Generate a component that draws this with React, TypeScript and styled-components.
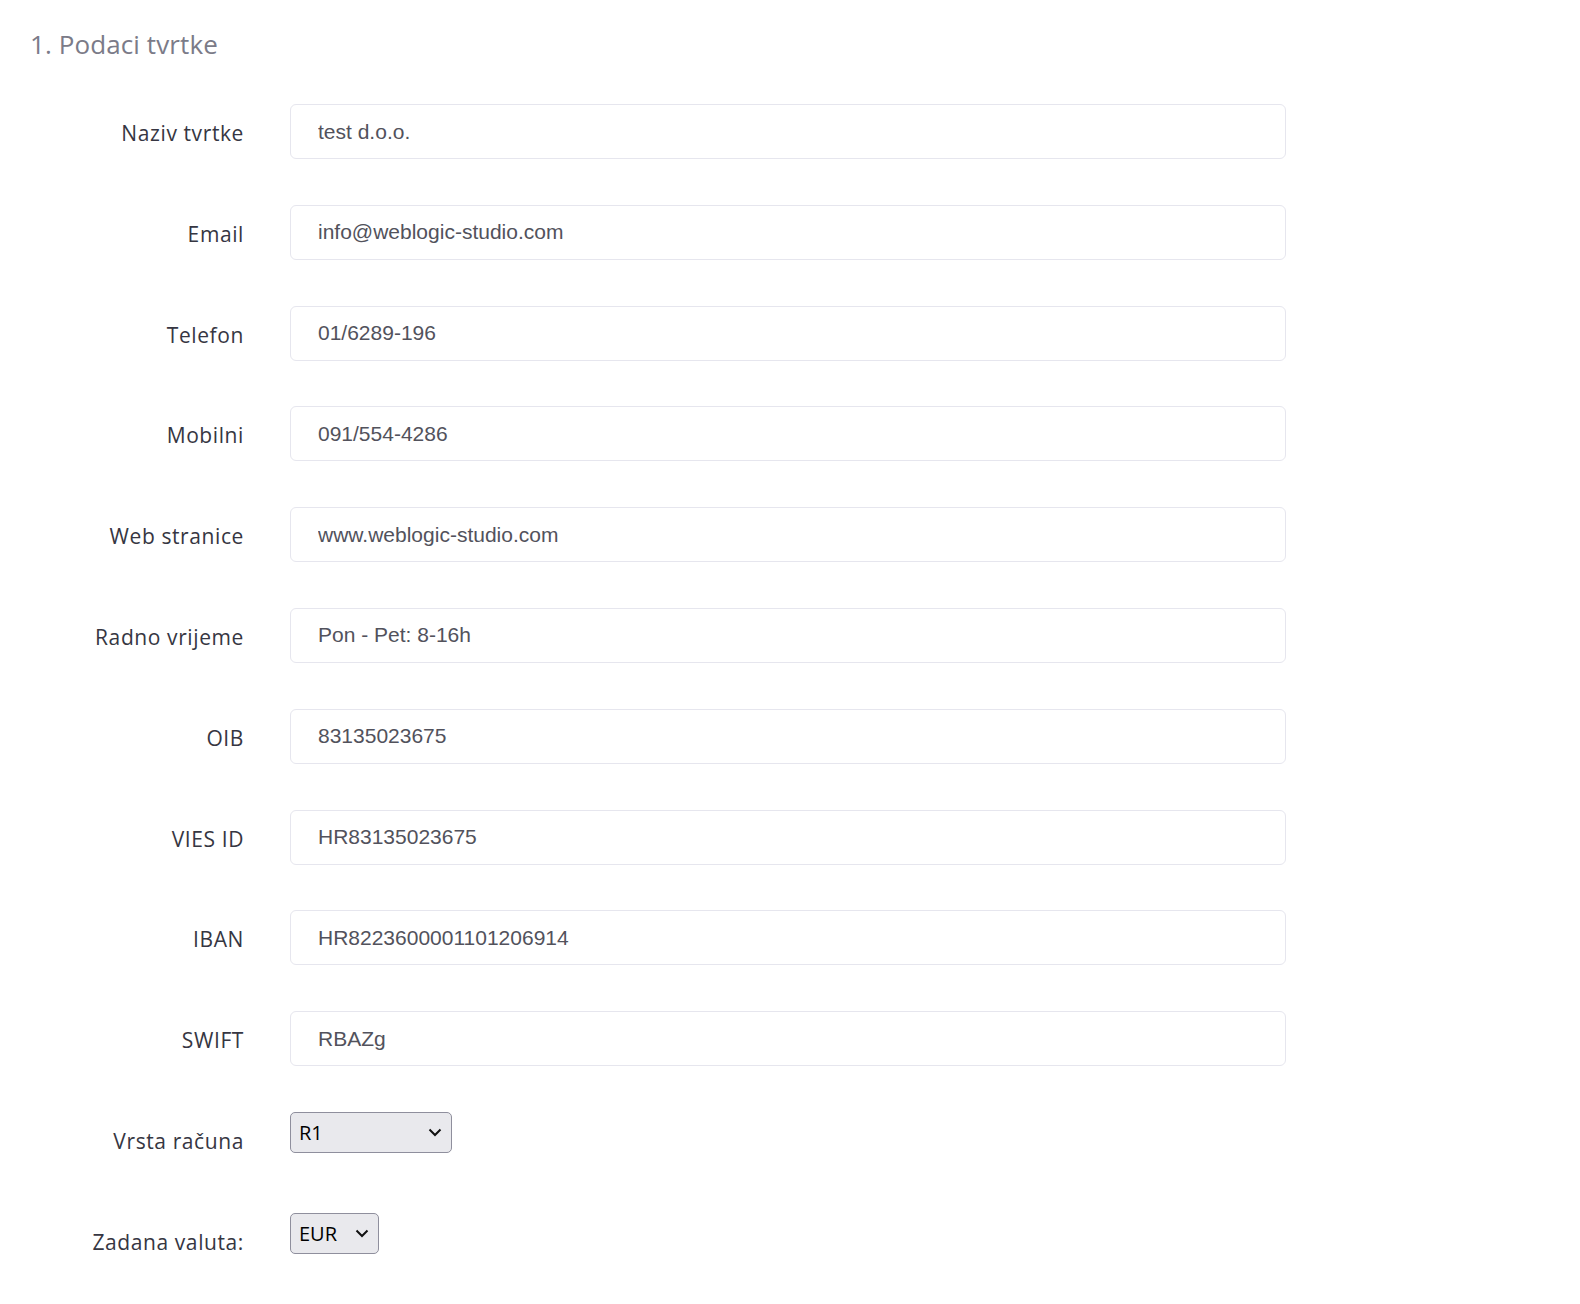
import React from 'react'
import styled, { createGlobalStyle } from 'styled-components'

const GlobalStyle = createGlobalStyle`
  body {
    margin: 0;
    background: #fff;
    font-family: "Open Sans", "Liberation Sans", sans-serif;
  }
`

const Page = styled.div`
  padding: 27px 30px 40px 30px;
  box-sizing: border-box;
  width: 1580px;
`

const Title = styled.h2`
  margin: 0 0 43px 0;
  font-family: "Open Sans", sans-serif;
  font-size: 26px;
  line-height: 34px;
  font-weight: 500;
  color: #7b7b88;
  letter-spacing: 0.1px;
`

const Form = styled.div`
  display: flex;
  flex-direction: column;
  gap: 45.8px;
`

const Row = styled.div`
  display: grid;
  grid-template-columns: 214px 996px;
  column-gap: 46px;
  align-items: start;
  min-height: 55px;
`

const Label = styled.label`
  text-align: right;
  padding-top: 15px;
  font-family: "Open Sans", sans-serif;
  font-size: 21px;
  line-height: 28px;
  letter-spacing: 0.6px;
  color: #363642;
`

const Input = styled.input`
  box-sizing: border-box;
  width: 100%;
  height: 55px;
  padding: 0 27px;
  border: 1px solid #e6e6ee;
  border-radius: 6px;
  background: #fff;
  font-family: "Liberation Sans", Arial, sans-serif;
  font-size: 21px;
  color: #52525c;
  outline: none;
`

const SelectWrap = styled.div<{ w: number }>`
  position: relative;
  width: ${({ w }) => w}px;
  height: 41px;
`

const Select = styled.select`
  appearance: none;
  box-sizing: border-box;
  width: 100%;
  height: 100%;
  padding: 0 30px 0 8px;
  border: 1px solid #8f8f9d;
  border-radius: 5px;
  background: #e9e9ed;
  font-family: "Open Sans", sans-serif;
  font-size: 20px;
  font-weight: 500;
  color: #000;
  outline: none;
`

const Chevron = styled.svg`
  position: absolute;
  right: 10px;
  top: 16px;
  pointer-events: none;
`

const fields = [
  ['Naziv tvrtke', 'test d.o.o.'],
  ['Email', 'info@weblogic-studio.com'],
  ['Telefon', '01/6289-196'],
  ['Mobilni', '091/554-4286'],
  ['Web stranice', 'www.weblogic-studio.com'],
  ['Radno vrijeme', 'Pon - Pet: 8-16h'],
  ['OIB', '83135023675'],
  ['VIES ID', 'HR83135023675'],
  ['IBAN', 'HR8223600001101206914'],
  ['SWIFT', 'RBAZg'],
]

function Dropdown({ w, options }: { w: number; options: string[] }) {
  return (
    <SelectWrap w={w}>
      <Select defaultValue={options[0]}>
        {options.map((o) => (
          <option key={o}>{o}</option>
        ))}
      </Select>
      <Chevron width="14" height="9" viewBox="0 0 14 9">
        <path d="M1.5 1.5 L7 7 L12.5 1.5" fill="none" stroke="#111" strokeWidth="2" />
      </Chevron>
    </SelectWrap>
  )
}

export default function App() {
  return (
    <Page>
      <GlobalStyle />
      <Title>1. Podaci tvrtke</Title>
      <Form>
        {fields.map(([label, value]) => (
          <Row key={label}>
            <Label>{label}</Label>
            <Input defaultValue={value} />
          </Row>
        ))}
        <Row>
          <Label>Vrsta računa</Label>
          <Dropdown w={162} options={['R1', 'R2']} />
        </Row>
        <Row>
          <Label>Zadana valuta:</Label>
          <Dropdown w={89} options={['EUR', 'USD']} />
        </Row>
      </Form>
    </Page>
  )
}
